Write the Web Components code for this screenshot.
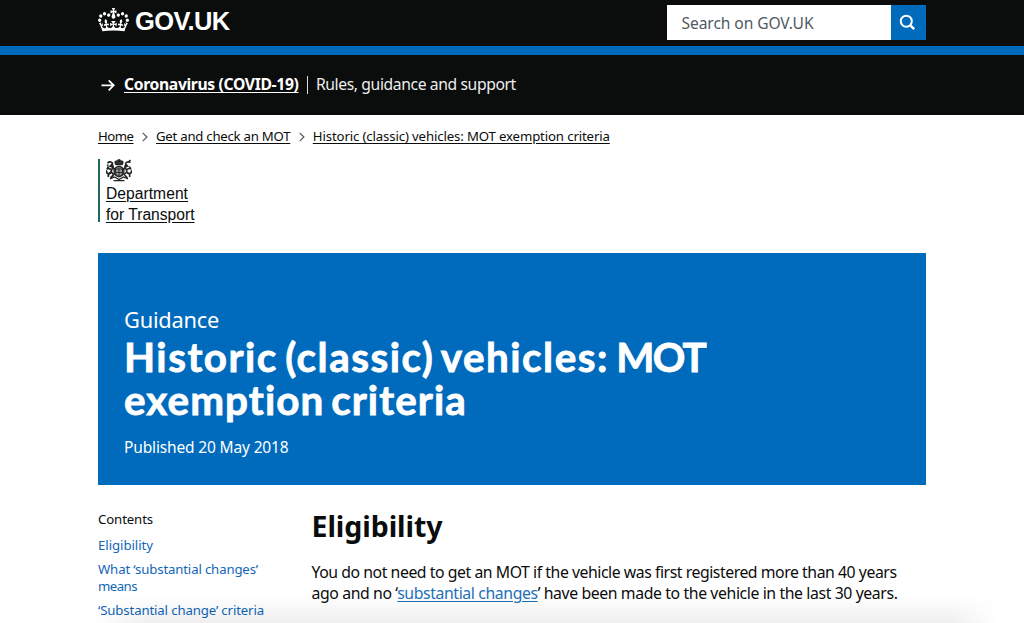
<!DOCTYPE html>
<html lang="en">
<head>
<meta charset="utf-8">
<title>Historic (classic) vehicles: MOT exemption criteria - GOV.UK</title>
<style>
html, body { margin: 0; height: 100%; overflow: hidden; background: #fff; }
body { font-family: "Noto Sans", sans-serif; color: #0b0c0c; }
a { color: inherit; }
</style>
</head>
<body>
<govuk-page></govuk-page>
<script>
/* A single line of text, tracked so that it spans the given measure. */
class TextLine extends HTMLElement {
  connectedCallback() {
    if (!this.shadowRoot) {
      this.attachShadow({ mode: 'open' }).innerHTML =
        '<style>:host{display:block;width:max-content;white-space:nowrap}::slotted(a){color:inherit}</style><slot></slot>';
    }
    const w = parseFloat(this.getAttribute('measure'));
    const n = this.textContent.length;
    if (w && n) this.style.letterSpacing = ((w - this.getBoundingClientRect().width) / n).toFixed(4) + 'px';
  }
}

const define = (name, html) => customElements.define(name, class extends HTMLElement {
  connectedCallback() {
    if (this.shadowRoot) return;
    const t = document.createElement('template');
    t.innerHTML = html;
    this.attachShadow({ mode: 'open' }).append(t.content.cloneNode(true));
  }
});

define('govuk-crown', `
<style>:host{display:block;width:31px;height:23px}svg{display:block}</style>
<svg width="31" height="23.5" viewBox="0 0 132 97" preserveAspectRatio="none" fill="#fff"><path fill-rule="evenodd" d="M25 30.2c3.5 1.5 7.7-.2 9.1-3.7 1.5-3.6-.2-7.8-3.9-9.2-3.6-1.4-7.6.3-9.1 3.9-1.4 3.5.3 7.5 3.9 9zM9 39.5c3.6 1.5 7.8-.2 9.2-3.7 1.5-3.6-.2-7.8-3.9-9.1-3.6-1.5-7.6.2-9.1 3.8-1.4 3.5.3 7.5 3.8 9zM4.4 57.2c3.5 1.5 7.7-.2 9.1-3.8 1.5-3.6-.2-7.7-3.9-9.1-3.5-1.5-7.6.3-9.1 3.8-1.4 3.5.3 7.6 3.9 9.1zm38.3-21.4c3.5 1.5 7.7-.2 9.1-3.8 1.5-3.6-.2-7.7-3.9-9.1-3.6-1.5-7.6.3-9.1 3.8-1.3 3.6.4 7.7 3.9 9.1zm64.4-5.6c-3.6 1.5-7.8-.2-9.1-3.7-1.5-3.6.2-7.8 3.8-9.2 3.6-1.4 7.7.3 9.2 3.9 1.3 3.5-.4 7.5-3.9 9zm15.9 9.3c-3.6 1.5-7.7-.2-9.1-3.7-1.5-3.6.2-7.8 3.7-9.1 3.6-1.5 7.7.2 9.2 3.8 1.5 3.5-.3 7.5-3.8 9zm4.7 17.7c-3.6 1.5-7.8-.2-9.2-3.8-1.5-3.6.2-7.7 3.9-9.1 3.6-1.5 7.7.3 9.2 3.8 1.3 3.5-.4 7.6-3.9 9.1zM89.3 35.8c-3.6 1.5-7.8-.2-9.2-3.8-1.4-3.6.2-7.7 3.9-9.1 3.6-1.5 7.7.3 9.2 3.8 1.4 3.6-.3 7.7-3.9 9.1zM69.7 17.7l8.9 4.7V9.3l-8.9 2.8c-.2-.3-.5-.6-.9-.9L72.4 0H59.6l3.5 11.2c-.3.3-.6.5-.9.9l-8.8-2.8v13.1l8.8-4.7c.3.3.6.7.9.9l-5 15.4v.1c-.2.8-.4 1.6-.4 2.4 0 4.1 3.1 7.5 7 8.1h.2c.3 0 .7.1 1 .1.4 0 .7 0 1-.1h.2c4-.6 7.1-4.1 7.1-8.1 0-.8-.1-1.7-.4-2.4V34l-5.1-15.4c.4-.2.7-.6 1-.9zM66 92.8c16.9 0 32.8 1.1 47.1 3.2 4-16.9 8.9-26.7 14-33.5l-9.6-3.4c1 4.9 1.1 7.2 0 10.2-1.5-1.4-3-4.3-4.2-8.7L108.6 76c2.8-2 5-3.2 7.5-3.3-4.4 9.4-10 11.9-13.6 11.2-4.3-.8-6.3-4.6-5.6-7.9 1-4.7 5.7-5.9 8-.5 4.3-8.7-3-11.4-7.6-8.8 7.1-7.2 7.9-13.5 2.1-21.1-8 6.1-8.1 12.3-4.5 20.8-4.7-5.4-12.1-2.5-9.5 6.2 3.4-5.2 7.9-2 7.2 3.1-.6 4.3-6.4 7.8-13.5 7.2-10.3-.9-10.9-8-11.2-13.8 2.5-.5 7.1 1.8 11 7.3L80.2 60c-4.1 4.4-8 5.3-12.3 5.4 1.4-4.4 8-11.6 8-11.6H55.5s6.4 7.2 7.9 11.6c-4.2-.1-8-1-12.3-5.4l1.4 16.4c3.9-5.5 8.5-7.7 10.9-7.3-.3 5.8-.9 12.8-11.1 13.8-7.2.6-12.9-2.9-13.5-7.2-.7-5 3.8-8.3 7.1-3.1 2.7-8.7-4.6-11.6-9.4-6.2 3.7-8.5 3.6-14.7-4.6-20.8-5.8 7.6-5 13.9 2.2 21.1-4.7-2.6-11.9.1-7.7 8.8 2.3-5.5 7.1-4.2 8.1.5.7 3.3-1.3 7.1-5.7 7.9-3.5.7-9-1.8-13.5-11.2 2.5.1 4.7 1.3 7.5 3.3l-4.7-15.4c-1.2 4.4-2.7 7.2-4.3 8.7-1.1-3-.9-5.3 0-10.2l-9.5 3.4c5 6.9 9.9 16.7 14 33.5 14.8-2.1 30.8-3.2 47.7-3.2z"/></svg>`);

define('site-search', `
<style>
:host{display:flex;width:259px;height:35px}
.field{flex:1;box-sizing:border-box;padding-left:15px;background:#fff;color:#505a5f;font-size:15.6px;line-height:36px}
button{width:35px;border:0;padding:0;background:#006bbd;display:grid;place-items:center}
svg{display:block}
</style>
<div class="field"><text-line measure="132">Search on GOV.UK</text-line></div>
<button aria-label="Search"><svg width="35" height="35" viewBox="0 0 35 35" fill="none" stroke="#fff" stroke-width="2"><circle cx="15.3" cy="16.2" r="5.5"/><path d="M19 20.1l4.2 4.1" stroke-width="2.5"/></svg></button>`);

define('site-header', `
<style>
:host{display:block;background:#0b0c0c;border-bottom:9px solid #006bbd;height:46px;color:#fff}
.in{display:flex;width:827.5px;margin-left:98px;justify-content:space-between}
.logo{display:flex;gap:6px;padding-top:8px;font:700 25.5px/26px "Liberation Sans",sans-serif}
site-search{margin-top:5px}
</style>
<div class="in"><div class="logo"><govuk-crown></govuk-crown><text-line measure="94.5">GOV.UK</text-line></div><site-search></site-search></div>`);

define('covid-banner', `
<style>
:host{display:flex;box-sizing:border-box;height:60px;background:#0b0c0c;color:#fff;padding:17px 0 0 101px;font-size:15.7px;line-height:24px}
svg{display:block;margin-top:6px;width:14px;height:14px}
.b{font-weight:700;margin-left:9px;text-underline-offset:2px}
.bar{width:1.4px;height:18px;background:#ddd;margin:4px 7.500px 0 8.5px}
.r{color:#eee}
</style>
<svg viewBox="0 0 14 14" fill="none" stroke="#fff" stroke-width="1.8"><path d="M.5 7.3h12M7.7 2.3l5 5-5 5"/></svg>
<text-line class="b" measure="174.5"><a href="#">Coronavirus (COVID-19)</a></text-line><div class="bar"></div>
<text-line class="r" measure="200">Rules, guidance and support</text-line>`);

define('bread-crumbs', `
<style>
:host{display:flex;padding-top:11px;margin-bottom:1px;font-size:13.2px;line-height:20px;text-underline-offset:2px}
svg{display:block;width:6px;height:10px;margin:6px 8px 0 8.5px}
</style>
<text-line measure="35.5"><a href="#">Home</a></text-line>
<svg viewBox="0 0 6 10" fill="none" stroke="#505a5f" stroke-width="1.2"><path d="M.7.8l4.2 4.2L.7 9.2"/></svg>
<text-line measure="134.3"><a href="#">Get and check an MOT</a></text-line>
<svg viewBox="0 0 6 10" fill="none" stroke="#505a5f" stroke-width="1.2"><path d="M.7.8l4.2 4.2L.7 9.2"/></svg>
<text-line measure="297"><a href="#">Historic (classic) vehicles: MOT exemption criteria</a></text-line>`);

define('royal-crest', `
<style>:host{display:block;width:26px;height:23px}svg{display:block}</style>
<svg width="26" height="23" viewBox="0 0 52 46" fill="none" stroke="#222" stroke-width="2.600">
<path d="M20 11c-5-6 1-9 6-6 5-3 11 0 6 6z" fill="#333"/><path d="M26 0v6M23 2.500h6"/>
<circle cx="26" cy="25" r="10" fill="#999"/><path d="M19 20h14v7c0 5-3 7-7 9-4-2-7-4-7-9zM26 19v16M19 27h14" stroke-width="1.900"/>
<path d="M3 8c5-4 10-2 10 2l-4 4c6 1 6 6 10 9M12 12c4 3 2 8-1 9l-8-3M5 12l-3 1M12 21c-4 4 0 8 5 10M10 27c-5 1-6 6-5 9M15 32l-6 6M2 23c-4 5 3 8 7 5M2 21l3-6" stroke-width="3.600"/>
<path d="M49 7c-5-3-9-1-10 3l4 4c-6 1-6 6-10 9M40 12c-4 3-2 8 1 9l8-3M44 7l5-5M40 21c4 4 0 8-5 10M42 27c5 1 6 6 5 9M37 32l6 6M50 23c3 5-3 8-7 5M50 21l-3-6" stroke-width="3.200"/>
<path d="M8 40l9-4 9 5 9-5 9 4M15 43h22" stroke-width="2.500"/></svg>`);

define('org-logo', `
<style>
:host{display:block;box-sizing:border-box;width:105px;height:63px;margin-top:13px;border-left:2px solid #1d6b5a;padding-left:6px;font:15.6px/21px "Liberation Sans",sans-serif;text-underline-offset:1.5px}
royal-crest{margin-bottom:1px}
</style>
<royal-crest></royal-crest>
<text-line measure="82"><a href="#">Department</a></text-line>
<text-line measure="88.5"><a href="#">for Transport</a></text-line>`);

define('page-title', `
<style>
:host{display:block;box-sizing:border-box;height:232px;margin-top:31px;padding:53px 26px 0;background:#006bbd;color:#fff}
.k{font-size:21.800px;line-height:28px}
h1{margin:.5px 0 0;font-family:Lato,"Noto Sans",sans-serif;font-size:40.4px;line-height:43px;font-weight:700;word-spacing:-4px;-webkit-text-stroke:.8px #fff}
.caps{letter-spacing:-1.8px}
.d{font-size:15.5px;line-height:22px;margin-top:15.500px}
</style>
<text-line class="k" measure="95">Guidance</text-line>
<h1><text-line measure="585.5">Historic (classic) vehicles: <span class="caps">MOT</span></text-line><text-line measure="343.5">exemption criteria</text-line></h1>
<text-line class="d" measure="164.5">Published 20 May 2018</text-line>`);

define('contents-list', `
<style>
:host{display:block;width:213.500px;font-size:13.2px;line-height:17.5px}
h2{font:inherit;margin:0 0 8.500px}
nav{display:grid;gap:6px;color:#1066b8}
</style>
<h2><text-line measure="55">Contents</text-line></h2>
<nav><div><text-line measure="55">Eligibility</text-line></div>
<div><text-line measure="160">What ‘substantial changes’</text-line><text-line measure="39">means</text-line></div>
<div><text-line measure="166">‘Substantial change’ criteria</text-line></div></nav>`);

define('guidance-body', `
<style>
:host{display:block;font-size:15.8px;line-height:21.500px}
h2{margin:0 0 18px;font-size:28.500px;line-height:36px;font-weight:700}
a{color:#1d70b8 !important;text-underline-offset:2px}
</style>
<h2><text-line measure="131">Eligibility</text-line></h2>
<text-line measure="585">You do not need to get an MOT if the vehicle was first registered more than 40 years</text-line>
<text-line measure="586">ago and no ‘<a href="#">substantial changes</a>’ have been made to the vehicle in the last 30 years.</text-line>`);

define('govuk-page', `
<style>
:host{display:block;position:relative;height:623px;overflow:hidden}
main{width:827.5px;margin-left:98px}
.cols{display:flex;padding-top:24.300px}
contents-list{padding-top:2.200px}
guidance-body{margin-top:-1.500px}
.fade{position:absolute;left:90px;right:25px;bottom:0;height:28px;background:linear-gradient(#0000,#00000010);-webkit-mask-image:linear-gradient(90deg,#0000,#000 60px calc(100% - 50px),#0000);pointer-events:none}
</style>
<site-header></site-header><covid-banner></covid-banner>
<main><bread-crumbs></bread-crumbs><org-logo></org-logo><page-title></page-title>
<div class="cols"><contents-list></contents-list><guidance-body></guidance-body></div></main>
<div class="fade"></div>`);
/* Registered last, so lines are measured with every parent style in place. */
customElements.define('text-line', TextLine);
</script>
</body>
</html>
